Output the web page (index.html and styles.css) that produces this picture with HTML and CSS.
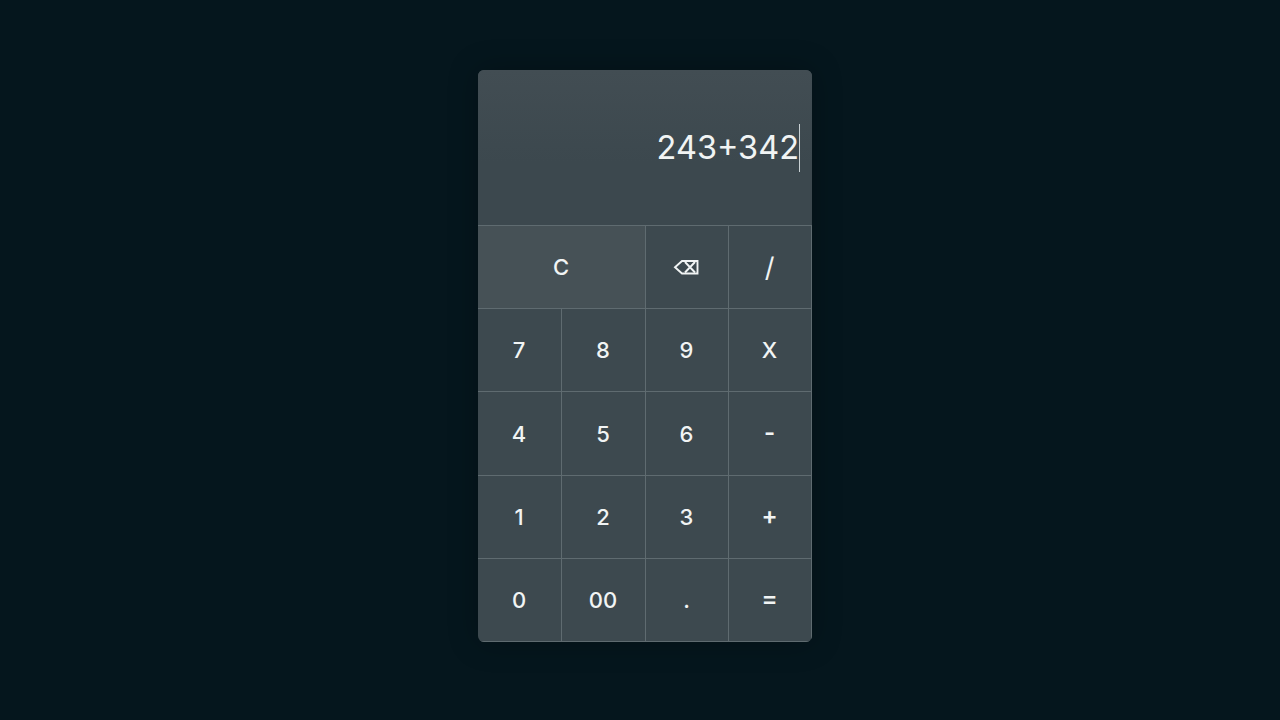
FILE: index.html
```html
<!DOCTYPE html>
<html lang="en">
<head>
    <meta charset="UTF-8">
    <title>Calculator</title>
    <link rel="stylesheet" href="styles.css">
</head>
<body>
    <div class="calculator">
        <div class="display">
            <span class="value">243+342</span>
            <span class="caret"></span>
        </div>
        <div class="keys">
            <div class="key wide">C</div>
            <div class="key">
                <svg class="back-icon" width="26" height="16" viewBox="0 0 26 16" fill="none" stroke="#f1f4f4" stroke-width="1.9">
                    <path d="M9 2H24.5V14.5H9L2 8.2Z"/>
                    <path d="M12 3L22 13.5M22 3L12 13.5"/>
                </svg>
            </div>
            <div class="key slash">/</div>
            <div class="key">7</div>
            <div class="key">8</div>
            <div class="key">9</div>
            <div class="key">X</div>
            <div class="key">4</div>
            <div class="key">5</div>
            <div class="key">6</div>
            <div class="key op">-</div>
            <div class="key">1</div>
            <div class="key">2</div>
            <div class="key">3</div>
            <div class="key op">+</div>
            <div class="key">0</div>
            <div class="key">00</div>
            <div class="key">.</div>
            <div class="key op">=</div>
        </div>
    </div>
</body>
</html>
```

FILE: styles.css
```css
body {
    margin: 0;
    height: 720px;
    padding: 70px 0 0 478px;
    box-sizing: border-box;
    background: #05161d;
    font-family: Inter, "Noto Sans", sans-serif;
    color: #f1f4f4;
    overflow: hidden;
}

.calculator {
    width: 334px;
    background: #3d494f;
    border-radius: 6px;
    overflow: hidden;
    box-shadow: 0 0 30px rgba(0, 0, 0, 0.25);
}

.display {
    height: 155px;
    display: flex;
    justify-content: flex-end;
    align-items: center;
    padding-right: 12px;
    background: linear-gradient(#424d53, #3c484e 60%);
    border-bottom: 1px solid #5f6b70;
}

.value {
    font-size: 32.5px;
    margin-bottom: 1px;
}

.caret {
    width: 1px;
    height: 48px;
    background: #c8d0d3;
}

.keys {
    display: grid;
    grid-template-columns: 84px 84px 83px 83px;
    grid-template-rows: 83px 83px 84px 83px 83px;
}

.key {
    display: flex;
    justify-content: center;
    align-items: center;
    box-sizing: border-box;
    padding-right: 1px;
    border-right: 1px solid #5f6b70;
    border-bottom: 1px solid #5f6b70;
    font-size: 22px;
    font-weight: 500;
}

.wide {
    grid-column: span 2;
    background: #465156;
}

.back-icon {
    margin-right: 2px;
}

.slash {
    font-size: 27px;
    font-weight: 400;
}

.op {
    padding-bottom: 3px;
    font-size: 24px;
    font-weight: 600;
}
```
